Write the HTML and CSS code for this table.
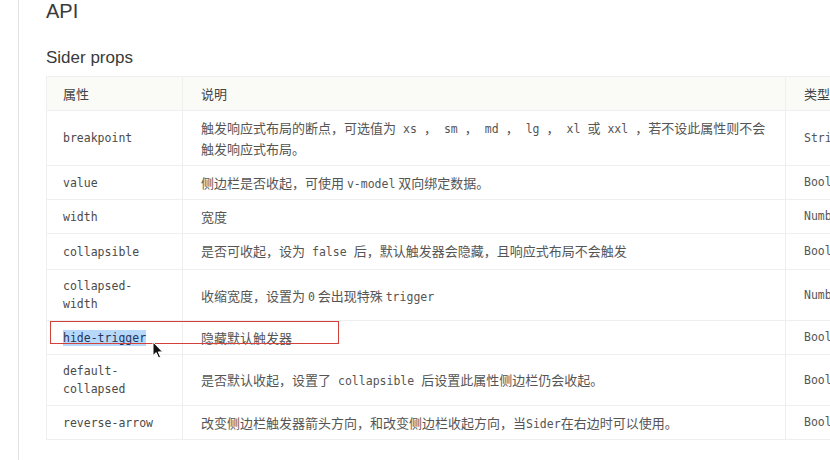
FILE: index.html
```html
<!DOCTYPE html>
<html lang="zh-CN">
<head>
<meta charset="utf-8">
<title>Sider props</title>
<link rel="stylesheet" href="styles.css">
</head>
<body>
<div class="page">
  <div class="content">
    <h2 class="api-title">API</h2>
    <h3 class="sub-title">Sider props</h3>
    <div class="table-wrap">
      <table class="props">
        <colgroup>
          <col class="c-name"><col class="c-desc"><col class="c-type"><col class="c-def">
        </colgroup>
        <thead>
          <tr><th>属性</th><th>说明</th><th>类型</th><th>默认值</th></tr>
        </thead>
        <tbody>
          <tr><td class="name">breakpoint</td><td class="desc">触发响应式布局的断点，可选值为<code>xs</code>，<code>sm</code>，<code>md</code>，<code>lg</code>，<code>xl</code>或<code>xxl</code>，若不设此属性则不会触发响应式布局。</td><td class="type">String</td><td class="type">-</td></tr>
          <tr><td class="name">value</td><td class="desc">侧边栏是否收起，可使用 <code class="plain">v-model</code> 双向绑定数据。</td><td class="type">Boolean</td><td class="type">false</td></tr>
          <tr><td class="name">width</td><td class="desc">宽度</td><td class="type">Number</td><td class="type">200</td></tr>
          <tr><td class="name">collapsible</td><td class="desc">是否可收起，设为<code>false</code>后，默认触发器会隐藏，且响应式布局不会触发</td><td class="type">Boolean</td><td class="type">false</td></tr>
          <tr><td class="name">collapsed-<br>width</td><td class="desc">收缩宽度，设置为 <code class="plain">0</code> 会出现特殊 <code class="plain">trigger</code></td><td class="type">Number</td><td class="type">64</td></tr>
          <tr class="hl"><td class="name"><span class="sel">hide-trigger</span></td><td class="desc">隐藏默认触发器</td><td class="type">Boolean</td><td class="type">false</td></tr>
          <tr><td class="name">default-<br>collapsed</td><td class="desc">是否默认收起，设置了<code>collapsible</code>后设置此属性侧边栏仍会收起。</td><td class="type">Boolean</td><td class="type">false</td></tr>
          <tr><td class="name">reverse-arrow</td><td class="desc">改变侧边栏触发器箭头方向，和改变侧边栏收起方向，当<span class="mono">Sider</span>在右边时可以使用。</td><td class="type">Boolean</td><td class="type">false</td></tr>
        </tbody>
      </table>
      <div class="red-box"></div>
      <svg class="cursor" width="12" height="18" viewBox="0 0 12 18" aria-hidden="true">
        <path d="M1 1 L1 14.5 L4.2 11.6 L6.6 17 L8.6 16.1 L6.3 10.9 L10.6 10.9 Z" fill="#111" stroke="#fff" stroke-width="1" stroke-linejoin="round"/>
      </svg>
    </div>
  </div>
</div>
</body>
</html>
```

FILE: styles.css
```css
html, body {
  margin: 0;
  padding: 0;
  background: #fff;
  overflow: hidden;
}

body {
  width: 830px;
  height: 460px;
  font-family: "Liberation Sans", Arial, "Noto Sans CJK SC", sans-serif;
  color: #444;
}

.page {
  margin-left: 18px;
  border-left: 1px solid #e2e2e2;
  height: 460px;
}

.content {
  padding-left: 27px;
}

.api-title {
  margin: 0;
  padding-top: 1px;
  font-size: 20px;
  line-height: 20px;
  font-weight: normal;
  color: #3a3a3a;
}

.sub-title {
  margin: 27px 0 8px;
  font-size: 17px;
  line-height: 20px;
  font-weight: normal;
  color: #3a3a3a;
}

.table-wrap {
  position: relative;
  width: 1000px;
}

.props {
  border-collapse: collapse;
  table-layout: fixed;
  width: 990px;
  border: 1px solid #ececec;
  font-family: "Noto Sans CJK SC", "Liberation Sans", sans-serif;
  font-size: 13px;
  color: #555;
}

.c-name { width: 136px; }
.c-desc { width: 603px; }
.c-type { width: 130px; }
.c-def { width: 121px; }

.props th,
.props td {
  border: 1px solid #efefef;
  padding: 7px 18px;
  text-align: left;
  vertical-align: middle;
  line-height: 19px;
}

.props th {
  background: #fafaf6;
  font-weight: normal;
  color: #444;
}

.props th:first-child,
.props td:first-child {
  padding-left: 16px;
}

.props td.name,
.props td.type,
.mono,
.props code {
  font-family: "DejaVu Sans Mono", "Liberation Mono", monospace;
}

.props td.name {
  font-size: 11.5px;
  line-height: 18px;
  color: #4a4a4a;
}

.props td.type {
  font-size: 11.5px;
}

.props td.desc {
  font-size: 13px;
}

.mono {
  font-size: 11.5px;
  line-height: 1;
}

.props code {
  font-size: 11.5px;
  line-height: 20px;
  padding: 0 6px;
  margin: 0 1px;
  color: #555;
}

.props code.plain {
  padding: 0;
  margin: 0;
  line-height: 1;
}

.sel {
  background: #b6d8fb;
  color: #24365c;
  padding: 1px 0;
}

.red-box {
  position: absolute;
  left: 4px;
  top: 245px;
  width: 287px;
  height: 21px;
  border: 1px solid #d2403a;
  pointer-events: none;
}

.cursor {
  position: absolute;
  left: 106px;
  top: 265px;
}
```
